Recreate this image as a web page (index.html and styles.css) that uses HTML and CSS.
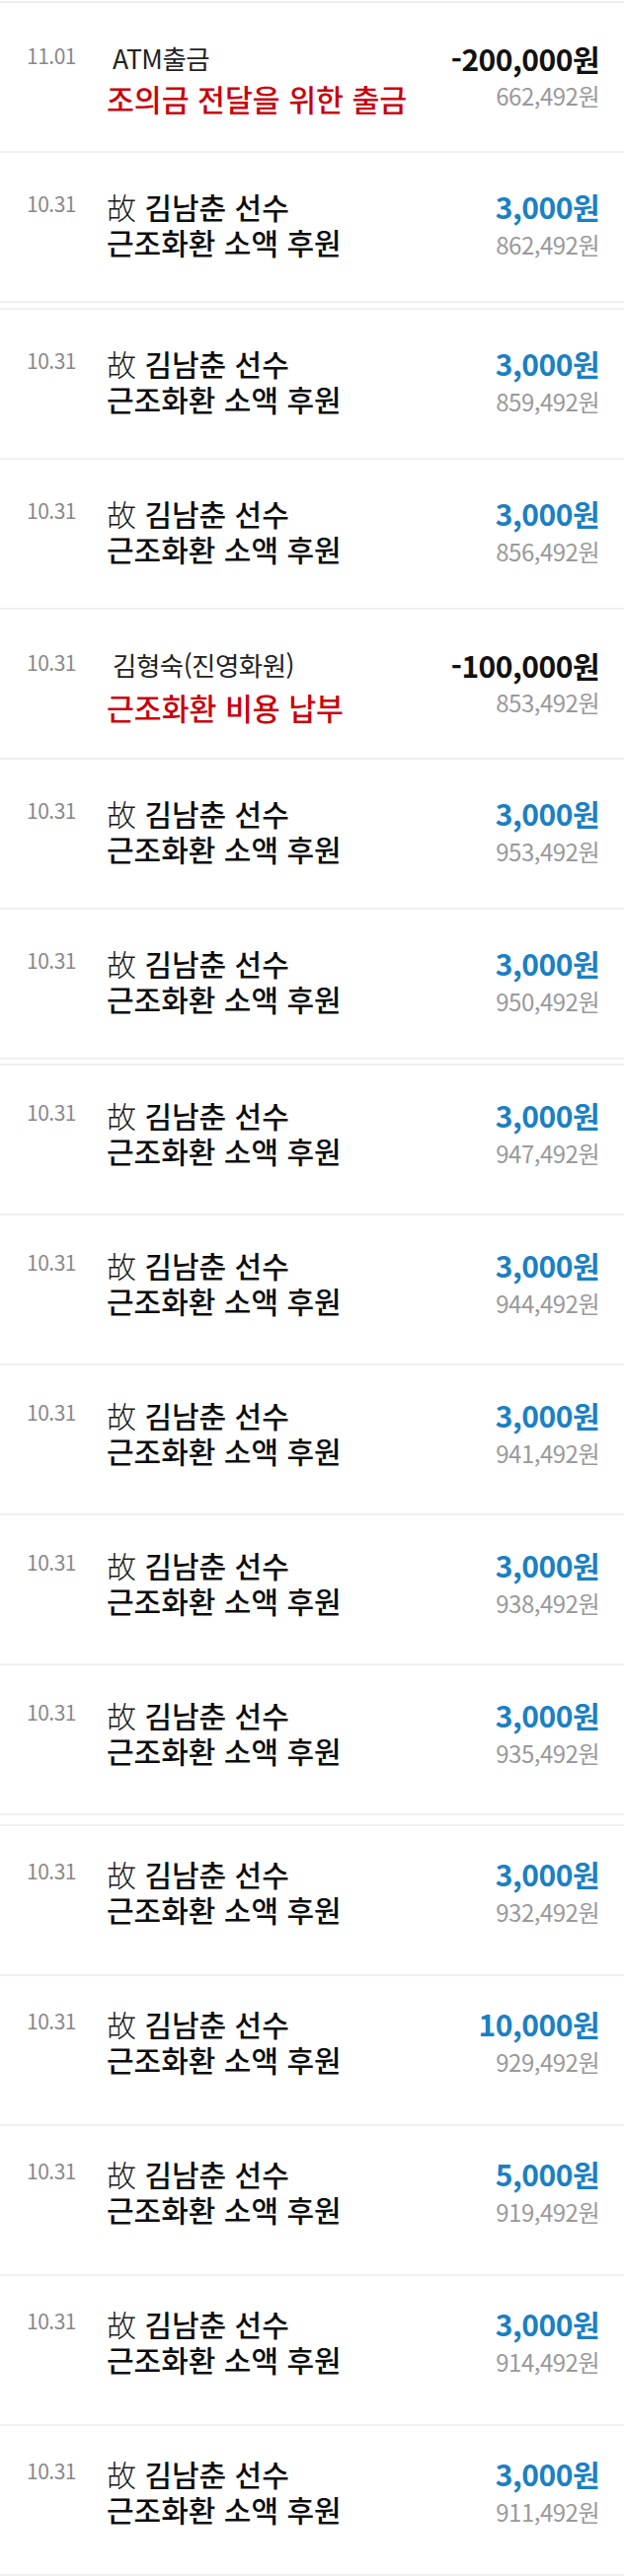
FILE: index.html
```html
<!DOCTYPE html>
<html lang="ko">
<head>
<meta charset="utf-8">
<title>거래내역</title>
<link rel="stylesheet" href="styles.css">
</head>
<body>
<div class="list">
  <div class="row memo-row">
    <div class="date">11.01</div>
    <div class="desc"><div class="memo">ATM출금</div><div class="note">조의금 전달을 위한 출금</div></div>
    <div class="money"><div class="amt minus">-200,000원</div><div class="bal">662,492원</div></div>
  </div>
  <div class="row">
    <div class="date">10.31</div>
    <div class="desc"><div class="title">故 김남춘 선수
근조화환 소액 후원</div></div>
    <div class="money"><div class="amt plus">3,000원</div><div class="bal">862,492원</div></div>
  </div>
  <div class="seam"></div>
  <div class="row">
    <div class="date">10.31</div>
    <div class="desc"><div class="title">故 김남춘 선수
근조화환 소액 후원</div></div>
    <div class="money"><div class="amt plus">3,000원</div><div class="bal">859,492원</div></div>
  </div>
  <div class="row">
    <div class="date">10.31</div>
    <div class="desc"><div class="title">故 김남춘 선수
근조화환 소액 후원</div></div>
    <div class="money"><div class="amt plus">3,000원</div><div class="bal">856,492원</div></div>
  </div>
  <div class="row memo-row2">
    <div class="date">10.31</div>
    <div class="desc"><div class="memo">김형숙(진영화원)</div><div class="note">근조화환 비용 납부</div></div>
    <div class="money"><div class="amt minus">-100,000원</div><div class="bal">853,492원</div></div>
  </div>
  <div class="row">
    <div class="date">10.31</div>
    <div class="desc"><div class="title">故 김남춘 선수
근조화환 소액 후원</div></div>
    <div class="money"><div class="amt plus">3,000원</div><div class="bal">953,492원</div></div>
  </div>
  <div class="row">
    <div class="date">10.31</div>
    <div class="desc"><div class="title">故 김남춘 선수
근조화환 소액 후원</div></div>
    <div class="money"><div class="amt plus">3,000원</div><div class="bal">950,492원</div></div>
  </div>
  <div class="seam seam-s"></div>
  <div class="row seg-c">
    <div class="date">10.31</div>
    <div class="desc"><div class="title">故 김남춘 선수
근조화환 소액 후원</div></div>
    <div class="money"><div class="amt plus">3,000원</div><div class="bal">947,492원</div></div>
  </div>
  <div class="row seg-c">
    <div class="date">10.31</div>
    <div class="desc"><div class="title">故 김남춘 선수
근조화환 소액 후원</div></div>
    <div class="money"><div class="amt plus">3,000원</div><div class="bal">944,492원</div></div>
  </div>
  <div class="row seg-c">
    <div class="date">10.31</div>
    <div class="desc"><div class="title">故 김남춘 선수
근조화환 소액 후원</div></div>
    <div class="money"><div class="amt plus">3,000원</div><div class="bal">941,492원</div></div>
  </div>
  <div class="row seg-c">
    <div class="date">10.31</div>
    <div class="desc"><div class="title">故 김남춘 선수
근조화환 소액 후원</div></div>
    <div class="money"><div class="amt plus">3,000원</div><div class="bal">938,492원</div></div>
  </div>
  <div class="row seg-c">
    <div class="date">10.31</div>
    <div class="desc"><div class="title">故 김남춘 선수
근조화환 소액 후원</div></div>
    <div class="money"><div class="amt plus">3,000원</div><div class="bal">935,492원</div></div>
  </div>
  <div class="seam seam-l"></div>
  <div class="row seg-d">
    <div class="date">10.31</div>
    <div class="desc"><div class="title">故 김남춘 선수
근조화환 소액 후원</div></div>
    <div class="money"><div class="amt plus">3,000원</div><div class="bal">932,492원</div></div>
  </div>
  <div class="row seg-d">
    <div class="date">10.31</div>
    <div class="desc"><div class="title">故 김남춘 선수
근조화환 소액 후원</div></div>
    <div class="money"><div class="amt plus">10,000원</div><div class="bal">929,492원</div></div>
  </div>
  <div class="row seg-d">
    <div class="date">10.31</div>
    <div class="desc"><div class="title">故 김남춘 선수
근조화환 소액 후원</div></div>
    <div class="money"><div class="amt plus">5,000원</div><div class="bal">919,492원</div></div>
  </div>
  <div class="row seg-d">
    <div class="date">10.31</div>
    <div class="desc"><div class="title">故 김남춘 선수
근조화환 소액 후원</div></div>
    <div class="money"><div class="amt plus">3,000원</div><div class="bal">914,492원</div></div>
  </div>
  <div class="row seg-d">
    <div class="date">10.31</div>
    <div class="desc"><div class="title">故 김남춘 선수
근조화환 소액 후원</div></div>
    <div class="money"><div class="amt plus">3,000원</div><div class="bal">911,492원</div></div>
  </div>
</div>
</body>
</html>
```

FILE: styles.css
```css
html, body {
  margin: 0;
  padding: 0;
  background: #ffffff;
}
body {
  font-family: "Noto Sans CJK KR", "Noto Sans", sans-serif;
  color: #111111;
}
.list {
  margin-top: 1px;
  border-top: 2px solid #f0f0f0;
}
.row {
  box-sizing: border-box;
  height: 152px;
  border-bottom: 2px solid #f0f0f0;
  display: flex;
  align-items: flex-start;
  padding: 36px 25px 0 27px;
}
.row.memo-row { padding-top: 38px; }
.row.memo-row2 { padding-top: 38px; }
.row.seg-c { padding-top: 32px; }
.row.seg-d { padding-top: 30px; }
.seam {
  height: 5px;
  border-bottom: 2px solid #f0f0f0;
}
.seam-s { height: 4px; }
.seam-l { height: 9px; }
.date {
  width: 81px;
  flex: none;
  margin-top: -3px;
  font-size: 21px;
  line-height: 36px;
  color: #888888;
  letter-spacing: -0.5px;
}
.desc {
  flex: 1;
  min-width: 0;
}
.title {
  font-size: 30px;
  line-height: 36px;
  font-weight: 500;
  color: #0d0d0d;
  white-space: pre-line;
}
.title::first-letter {
  font-weight: 300;
  color: #1a1a1a;
}
.memo {
  font-size: 26.5px;
  line-height: 36px;
  color: #222222;
  padding-left: 6px;
  letter-spacing: -0.5px;
  white-space: nowrap;
}
.note {
  font-size: 30.3px;
  line-height: 47px;
  font-weight: 500;
  color: #c9000b;
  white-space: nowrap;
}
.memo-row2 .note {
  line-height: 50px;
}
.money {
  flex: none;
  text-align: right;
}
.amt {
  font-size: 30px;
  font-weight: 700;
  line-height: 36px;
  letter-spacing: -0.5px;
  white-space: nowrap;
}
.amt.minus { color: #111111; }
.amt.plus { color: #1a80c4; }
.bal {
  font-size: 24px;
  line-height: 42px;
  color: #9a9a9a;
  letter-spacing: -0.5px;
  white-space: nowrap;
}
.memo-row .bal, .memo-row2 .bal {
  line-height: 40px;
}
```
